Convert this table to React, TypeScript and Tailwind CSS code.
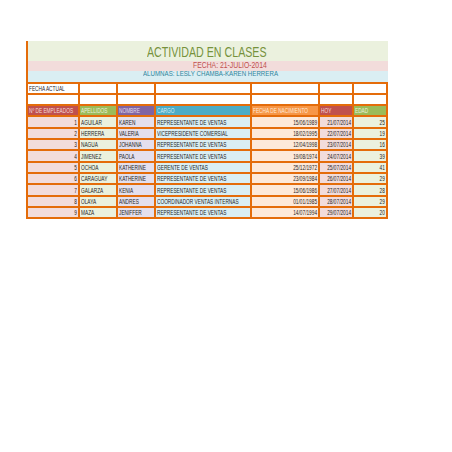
import React from "react";

const rows = [
  ["1", "AGUILAR", "KAREN", "REPRESENTANTE DE VENTAS", "15/06/1989", "21/07/2014", "25"],
  ["2", "HERRERA", "VALERIA", "VICEPRESIDENTE COMERSIAL", "18/02/1995", "22/07/2014", "19"],
  ["3", "NAGUA", "JOHANNA", "REPRESENTANTE DE VENTAS", "12/04/1998", "23/07/2014", "16"],
  ["4", "JIMENEZ", "PAOLA", "REPRESENTANTE DE VENTAS", "19/08/1974", "24/07/2014", "39"],
  ["5", "OCHOA", "KATHERINE", "GERENTE DE VENTAS", "25/12/1972", "25/07/2014", "41"],
  ["6", "CARAGUAY", "KATHERINE", "REPRESENTANTE DE VENTAS", "23/09/1984", "26/07/2014", "29"],
  ["7", "GALARZA", "KENIA", "REPRESENTANTE DE VENTAS", "15/06/1986", "27/07/2014", "28"],
  ["8", "OLAYA", "ANDRES", "COORDINADOR VENTAS INTERNAS", "01/01/1985", "28/07/2014", "29"],
  ["9", "MAZA", "JENIFFER", "REPRESENTANTE DE VENTAS", "14/07/1994", "29/07/2014", "20"],
];

const dataBg = ["bg-[#f2dcdb]", "bg-[#ebf1de]", "bg-[#e4dfec]", "bg-[#daeef3]", "bg-[#fde9d9]", "bg-[#f2dcdb]", "bg-[#ebf1de]"];
const rightAligned = [true, false, false, false, true, true, true];

const headers = [
  { t: "Nº DE EMPLEADOS", bg: "bg-[#c0504d]", c: "text-[#f2dcdb]" },
  { t: "APELLIDOS", bg: "bg-[#9bbb59]", c: "text-[#ebf1de]" },
  { t: "NOMBRE", bg: "bg-[#8064a2]", c: "text-[#e4dfec]" },
  { t: "CARGO", bg: "bg-[#4bacc6]", c: "text-[#daeef3]" },
  { t: "FECHA DE NACIMIENTO", bg: "bg-[#f79646]", c: "text-[#fde9d9]" },
  { t: "HOY", bg: "bg-[#c0504d]", c: "text-[#f2dcdb]" },
  { t: "EDAD", bg: "bg-[#9bbb59]", c: "text-[#ebf1de]" },
];

function Txt({ children, right }: { children: React.ReactNode; right?: boolean }) {
  return (
    <span
      className={
        "inline-block shrink-0 whitespace-nowrap text-[7px] leading-none scale-x-[0.68] " +
        (right ? "origin-right" : "origin-left")
      }
    >
      {children}
    </span>
  );
}

function Cell({ bg, right, children, color }: { bg: string; right?: boolean; children?: React.ReactNode; color?: string }) {
  return (
    <div
      className={
        "h-[9.33px] flex items-center overflow-visible " +
        bg +
        " " +
        (color ?? "text-[#1f1f1f]") +
        " " +
        (right ? "justify-end pr-[1px]" : "justify-start pl-[1px]")
      }
    >
      {children !== undefined && <Txt right={right}>{children}</Txt>}
    </div>
  );
}

export default function App() {
  return (
    <div className="w-[452px] h-[452px] bg-white font-['Liberation_Sans',Arial,sans-serif] overflow-hidden">
      <div className="pt-[41px] pl-[26px]">
        <div className="w-[362px] border-l-2 border-[#e46c0a]">
          <div className="h-[19.5px] bg-[#ebf1de] pl-[119px] pt-[3px] flex items-start">
            <span className="inline-block shrink-0 whitespace-nowrap text-[15px] leading-none text-[#76923c] scale-x-[0.71] origin-left">
              ACTIVIDAD EN CLASES
            </span>
          </div>
          <div className="h-[10.5px] bg-[#f2dcdb] pl-[165px] flex items-start">
            <span className="inline-block shrink-0 whitespace-nowrap text-[9px] leading-none text-[#c0504d] scale-x-[0.76] origin-left">
              FECHA: 21-JULIO-2014
            </span>
          </div>
          <div className="h-[10.5px] bg-[#daeef3] pl-[115px] flex items-start">
            <span className="inline-block shrink-0 whitespace-nowrap text-[7px] leading-none text-[#31859c] scale-x-[0.88] origin-left -mt-[1px]">
              ALUMNAS: LESLY CHAMBA-KAREN HERRERA
            </span>
          </div>
        </div>
        <div className="grid grid-cols-[50px_36px_36px_94px_66px_32px_32px] gap-[2px] bg-[#e46c0a] p-[2px] w-[362px]">
          <Cell bg="bg-white">FECHA ACTUAL</Cell>
          <Cell bg="bg-white" />
          <Cell bg="bg-white" />
          <Cell bg="bg-white" />
          <Cell bg="bg-white" />
          <Cell bg="bg-white" />
          <Cell bg="bg-white" />
          {Array.from({ length: 7 }).map((_, i) => (
            <Cell key={"b" + i} bg="bg-white" />
          ))}
          {headers.map((h) => (
            <Cell key={h.t} bg={h.bg} color={h.c}>
              {h.t}
            </Cell>
          ))}
          {rows.map((r, ri) =>
            r.map((v, ci) => (
              <Cell key={ri + "-" + ci} bg={dataBg[ci]} right={rightAligned[ci]}>
                {v}
              </Cell>
            ))
          )}
        </div>
      </div>
    </div>
  );
}
